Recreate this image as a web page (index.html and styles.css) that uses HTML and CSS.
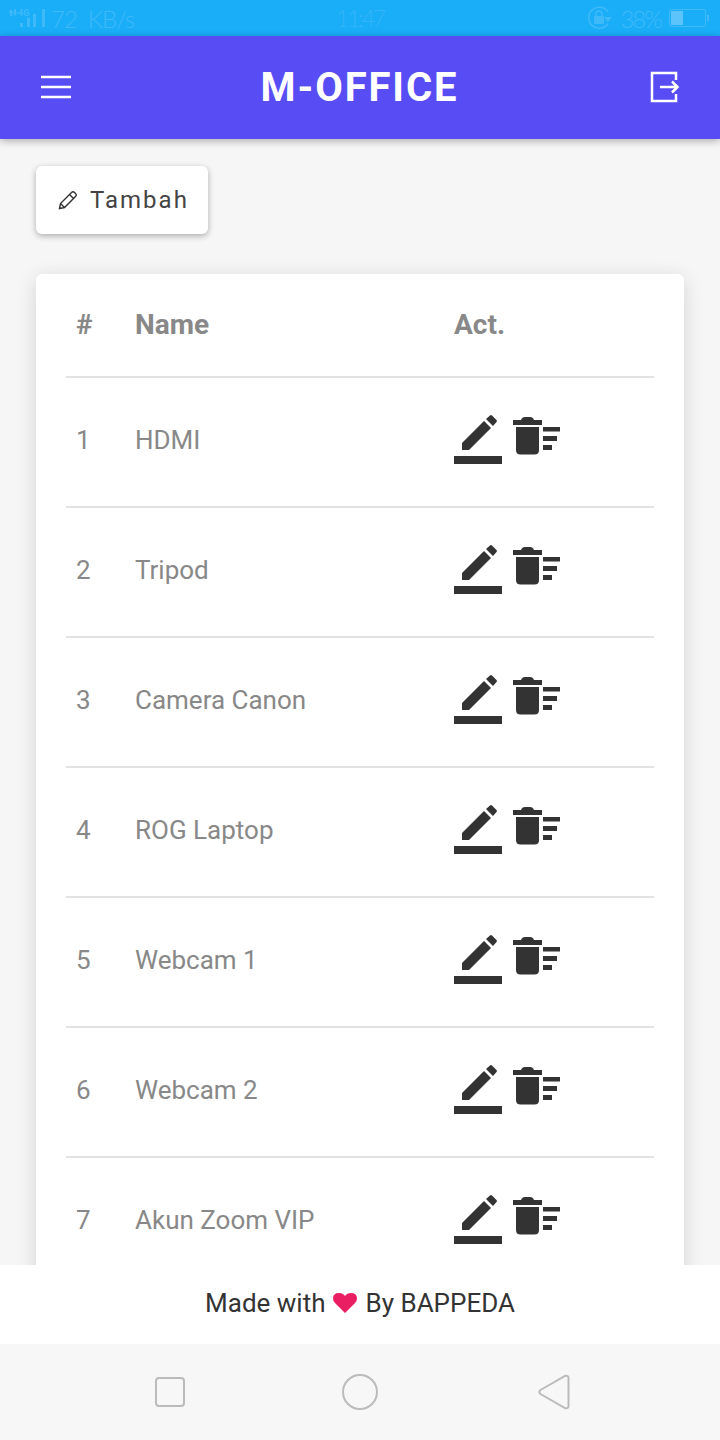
FILE: index.html
```html
<!DOCTYPE html>
<html>
<head>
	<title>M-OFFICE</title>
	<link rel="stylesheet" href="styles.css">
</head>
<body>
	<svg class="sprite" width="0" height="0">
		<symbol id="edit" viewBox="0 0 48 50">
			<path d="M8 36V29L30 7L37 14L15 36Z"/>
			<path d="M32 5L36 1.5Q37 .5 38 1.5L42.5 6Q43.5 7 42.5 8L39 12Z"/>
			<rect x="0" y="42" width="48" height="8"/>
		</symbol>
		<symbol id="trash" viewBox="0 0 48 40">
			<path d="M0 4H8Q9 1 12 1H17Q20 1 21 4H29V9H0Z"/>
			<path d="M3 11H26V34Q26 38.5 21.5 38.5H7.5Q3 38.5 3 34Z"/>
			<rect x="30" y="11" width="17" height="4.5"/>
			<rect x="30" y="20" width="14" height="5"/>
			<rect x="30" y="29" width="9" height="5"/>
		</symbol>
	</svg>

	<div class="status-bar">
		<div class="status-left">
			<svg width="38" height="24" viewBox="0 0 38 24">
				<path class="st-fill" d="M3 3L5.5 6.5H4V10H2V6.5H.5ZM6 3H8V6.5H9.5L7 10L4.5 6.5H6Z"/>
				<text class="st-4g" x="10" y="10">4G</text>
				<rect class="st-fill" x="12" y="17" width="3" height="4"/>
				<rect class="st-fill" x="19" y="12" width="3" height="9"/>
				<rect class="st-fill" x="25" y="8" width="3" height="13"/>
				<rect class="st-fill" x="34" y="3" width="3" height="18"/>
			</svg>
			<span class="speed">72 &nbsp;KB/s</span>
		</div>
		<div class="status-time">11:47</div>
		<div class="status-right">
			<svg width="24" height="24" viewBox="0 0 24 24">
				<path class="st-line" d="M20 17.5A10.5 10.5 0 1 1 20 6"/>
				<rect class="st-fill" x="6" y="10" width="10" height="8" rx="1"/>
				<path class="st-line" d="M8 10V8A3 3 0 0 1 14 8V10"/>
				<path class="st-fill" d="M16 11H24L20 16Z"/>
			</svg>
			<span class="percent">38%</span>
			<div class="battery"><span class="battery-level"></span></div>
			<span class="battery-tip"></span>
		</div>
	</div>

	<header class="topbar">
		<svg width="32" height="24" viewBox="0 0 32 24">
			<path d="M1 2H31M1 12H31M1 22H31" fill="none" stroke="#fff" stroke-width="2.5"/>
		</svg>
		<h1>M-OFFICE</h1>
		<svg width="30" height="32" viewBox="0 0 30 32">
			<path d="M26 9V2H2V30H26V23" fill="none" stroke="#fff" stroke-width="2.5"/>
			<path d="M10 16H27M22 10.5L27.5 16L22 21.5" fill="none" stroke="#fff" stroke-width="2.5"/>
		</svg>
	</header>

	<main class="content">
		<button class="btn-add" type="button">
			<svg width="20" height="20" viewBox="0 0 20 20">
				<path d="M1.5 18.5L2.5 13.5L13.5 2.5Q15 1 16.5 2.5L17.5 3.5Q19 5 17.5 6.5L6.5 17.5ZM2.5 13.5L6.5 17.5M11.5 4.5L15.5 8.5" fill="none" stroke="#333" stroke-width="1.4"/>
			</svg>
			Tambah
		</button>

		<div class="card">
			<div class="row row-head">
				<span class="num">#</span>
				<span>Name</span>
				<span>Act.</span>
			</div>
			<div class="row">
				<span class="num">1</span>
				<span>HDMI</span>
				<span class="actions"><svg class="ic-edit"><use href="#edit"/></svg><svg class="ic-trash"><use href="#trash"/></svg></span>
			</div>
			<div class="row">
				<span class="num">2</span>
				<span>Tripod</span>
				<span class="actions"><svg class="ic-edit"><use href="#edit"/></svg><svg class="ic-trash"><use href="#trash"/></svg></span>
			</div>
			<div class="row">
				<span class="num">3</span>
				<span>Camera Canon</span>
				<span class="actions"><svg class="ic-edit"><use href="#edit"/></svg><svg class="ic-trash"><use href="#trash"/></svg></span>
			</div>
			<div class="row">
				<span class="num">4</span>
				<span>ROG Laptop</span>
				<span class="actions"><svg class="ic-edit"><use href="#edit"/></svg><svg class="ic-trash"><use href="#trash"/></svg></span>
			</div>
			<div class="row">
				<span class="num">5</span>
				<span>Webcam 1</span>
				<span class="actions"><svg class="ic-edit"><use href="#edit"/></svg><svg class="ic-trash"><use href="#trash"/></svg></span>
			</div>
			<div class="row">
				<span class="num">6</span>
				<span>Webcam 2</span>
				<span class="actions"><svg class="ic-edit"><use href="#edit"/></svg><svg class="ic-trash"><use href="#trash"/></svg></span>
			</div>
			<div class="row">
				<span class="num">7</span>
				<span>Akun Zoom VIP</span>
				<span class="actions"><svg class="ic-edit"><use href="#edit"/></svg><svg class="ic-trash"><use href="#trash"/></svg></span>
			</div>
		</div>
	</main>

	<footer class="footer">
		Made with
		<svg width="24" height="20" viewBox="0 0 24 20">
			<path d="M12 20L2 10Q0 8 0 5.5Q0 0 6 0Q10 0 12 3Q14 0 18 0Q24 0 24 5.5Q24 8 22 10Z" fill="#e91e63"/>
		</svg>
		By BAPPEDA
	</footer>

	<nav class="nav-bar">
		<svg class="nav-square" width="30" height="30" viewBox="0 0 30 30">
			<rect x="1" y="1" width="28" height="28" rx="3" fill="none" stroke="#bbb" stroke-width="2"/>
		</svg>
		<svg width="36" height="36" viewBox="0 0 36 36">
			<circle cx="18" cy="18" r="17" fill="none" stroke="#bbb" stroke-width="2"/>
		</svg>
		<svg class="nav-back" width="32" height="36" viewBox="0 0 32 36">
			<path d="M2.5 16L27 2Q30.5 1 30.5 4V32Q30.5 35 27 34L2.5 20Q0 18 2.5 16Z" fill="none" stroke="#bbb" stroke-width="2"/>
		</svg>
	</nav>
</body>
</html>
```

FILE: styles.css
```css
* {
	box-sizing: border-box;
}
html, body {
	height: 100%;
}
body {
	margin: 0;
	display: flex;
	flex-direction: column;
	height: 1440px;
	overflow: hidden;
	font-family: Roboto, "Liberation Sans", sans-serif;
	background-color: #f6f6f6;
}
.sprite {
	display: none;
}
.status-bar {
	flex: 0 0 36px;
	display: grid;
	grid-template-columns: 1fr auto 1fr;
	align-items: center;
	padding: 0 8px;
	background-color: #1aaef9;
	color: #3fb9f8;
	font-family: Lato, sans-serif;
	font-weight: 300;
	font-size: 24px;
}
.status-left, .status-right {
	display: flex;
	align-items: center;
}
.status-left {
	gap: 5px;
}
.status-right {
	justify-content: flex-end;
	gap: 8px;
	margin-right: 3px;
}
.speed {
	letter-spacing: -1px;
}
.percent {
	letter-spacing: -2px;
}
.st-fill {
	fill: #3fb9f8;
}
.st-line {
	fill: none;
	stroke: #3fb9f8;
	stroke-width: 1.5;
}
.st-4g {
	fill: #3fb9f8;
	font-family: Roboto, sans-serif;
	font-size: 9px;
	font-weight: 700;
}
.status-time {
	font-size: 23px;
	letter-spacing: -2.2px;
	color: #33b4f8;
}
.battery {
	width: 37px;
	height: 18px;
	padding: 1px;
	border: 1px solid #3fb9f8;
	border-radius: 2px;
}
.battery-level {
	display: block;
	width: 12px;
	height: 100%;
	background-color: #5cc4fa;
}
.battery-tip {
	width: 2px;
	height: 6px;
	margin-left: -7px;
	background-color: #3fb9f8;
}
.topbar {
	flex: 0 0 103px;
	display: flex;
	align-items: center;
	justify-content: space-between;
	padding: 0 40px 2px 40px;
	background-color: #584df5;
	box-shadow: 0 2px 8px rgba(0,0,0,0.3);
	position: relative;
	z-index: 2;
}
.topbar h1 {
	margin: 2px 0 0 -3px;
	color: #fff;
	font-size: 40px;
	font-weight: 700;
	letter-spacing: 1.9px;
}
.content {
	flex: 1;
	min-height: 0;
	overflow: hidden;
	padding: 27px 36px 0;
}
.btn-add {
	display: flex;
	align-items: center;
	gap: 12px;
	width: 172px;
	height: 68px;
	padding: 0 0 0 22px;
	border: none;
	border-radius: 6px;
	background-color: #fff;
	box-shadow: 0 2px 6px rgba(0,0,0,0.3);
	color: #444;
	font-family: Roboto, sans-serif;
	font-size: 24px;
	letter-spacing: 2px;
}
.card {
	margin-top: 40px;
	margin-bottom: 20px;
	padding: 0 30px;
	border-radius: 6px;
	background-color: #fff;
	box-shadow: 0 4px 20px rgba(0,0,0,0.14);
}
.row {
	display: grid;
	grid-template-columns: 69px 319px 1fr;
	align-items: center;
	height: 130px;
	padding-bottom: 4px;
	border-bottom: 2px solid #e2e2e2;
	color: #888;
	font-size: 26px;
}
.row-head {
	height: 104px;
	padding-bottom: 2px;
	font-weight: 700;
	font-size: 28px;
}
.num {
	padding-left: 10px;
}
.actions {
	display: flex;
	gap: 11px;
	align-items: flex-start;
	margin-top: -2px;
}
.ic-edit {
	width: 48px;
	height: 50px;
	fill: #333;
}
.ic-trash {
	width: 48px;
	height: 40px;
	margin-top: 2px;
	fill: #333;
}
.footer {
	flex: 0 0 79px;
	display: flex;
	align-items: center;
	justify-content: center;
	gap: 8px;
	padding-bottom: 4px;
	background-color: #fff;
	color: #333;
	font-size: 26px;
	position: relative;
	z-index: 1;
}
.nav-bar {
	flex: 0 0 96px;
	display: grid;
	grid-template-columns: 340px 40px 340px;
	align-items: center;
	justify-items: center;
	background-color: #f7f7f7;
}
.nav-square {
	justify-self: start;
	margin-left: 155px;
}
.nav-back {
	justify-self: start;
	margin-left: 158px;
}
```
